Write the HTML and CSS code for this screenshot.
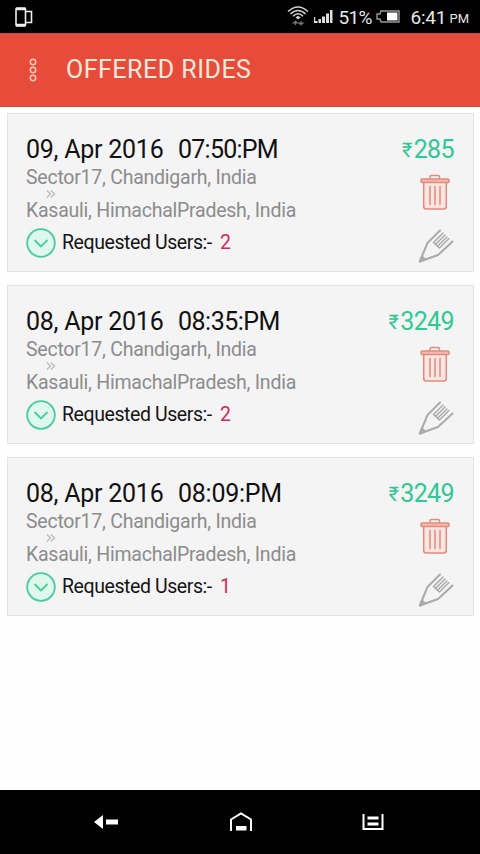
FILE: index.html
```
<!DOCTYPE html>
<html lang="en">
<head>
<meta charset="utf-8">
<title>Offered Rides</title>
<link rel="stylesheet" href="styles.css">
</head>
<body>
<svg class="defs" aria-hidden="true">
  <symbol id="trash" viewBox="0 0 30 36">
    <g fill="none" stroke="#e28a7c" stroke-width="1.5" stroke-linejoin="round" stroke-linecap="round">
      <path d="M10 4.500V3Q10 1.500 11.500 1.500H18Q19.500 1.500 19.500 3V4.500"/>
      <path d="M3.700 9V32.500Q3.700 35 6.200 35H23.800Q26.300 35 26.300 32.500V9" fill="#fae5e0"/>
      <rect x="1" y="5" width="28" height="3.500" rx="1" fill="#f4b9ae"/>
      <path d="M10 12.500V30.500M15 12.500V30.500M20 12.500V30.500"/>
    </g>
  </symbol>
  <symbol id="pencil" viewBox="0 0 36 36">
    <g fill="none" stroke="#ababab" stroke-width="2" stroke-linecap="round" stroke-linejoin="round">
      <path d="M22 1.500L9.500 14L1.800 32.500L20 26L34.500 12.500"/>
      <path d="M25 4L15.500 13.500L21.500 19L31 9.500M27 6L17.500 15.500M29 8L19.500 17.200" stroke-width="1.500"/>
      <path d="M1.800 32.500L4 27.500L7 30.500Z" fill="#ababab"/>
    </g>
  </symbol>
  <symbol id="expand" viewBox="0 0 30 30">
    <g fill="none" stroke="#48cba0" stroke-width="1.800">
      <circle cx="15" cy="15" r="13.800" fill="#dff8ee"/>
      <path d="M8.500 12L15 18.500L21.500 12"/>
    </g>
  </symbol>
</svg>
<header class="status">
  <svg class="device" width="18" height="20" viewBox="0 0 18 20" fill="none" stroke="#eee" stroke-width="1.600"><rect x="1" y="1" width="9.500" height="18" rx="1"/><path d="M1 2H10.500M1 18H10.500" stroke-width="2.500"/><path d="M10.500 4.500H16.500V15.500H10.500"/></svg>
  <div class="status-right">
    <svg class="wifi" width="22" height="20" viewBox="0 0 22 20" fill="none" stroke="#d4d4d4" stroke-width="1.500"><path d="M1 5.500Q11-3.500 21 5.500M3.500 8Q11 1 18.500 8M6 10.300Q11 5 16 10.300"/><path d="M8.500 11.500Q11 8.500 13.500 11.500L11 13.500Z" fill="#d4d4d4" stroke="none"/><path d="M8.500 19V15.500L6.500 17H10.500L8.500 15.500M14 15V18.500L12 17H16L14 18.500" stroke="#777" stroke-width="1.200"/></svg>
    <svg class="signal" width="19" height="14" viewBox="0 0 19 14" fill="#ddd"><path d="M0 7H1.200V11H3.500V13H0ZM4.500 9H7V13H4.500ZM8 6.500H11V13H8ZM12 3.500H15V13H12ZM16 0H18.500V13H16Z"/></svg>
    <span class="percent">51%</span>
    <svg class="battery" width="24" height="13" viewBox="0 0 24 13"><path d="M5 1H23V12H5L4 9H1V4H4Z" fill="none" stroke="#999" stroke-width="1.400"/><path d="M11 2.500H21.500V10.500H11Z" fill="#fff"/></svg>
    <span class="clock">6:41</span><span class="ampm">PM</span>
  </div>
</header>
<div class="appbar">
  <svg class="menu" width="10" height="24" viewBox="0 0 10 24" fill="none" stroke="#fbc9ba" stroke-width="1.500"><circle cx="5" cy="4" r="2.700"/><circle cx="5" cy="12" r="2.700"/><circle cx="5" cy="20" r="2.700"/></svg>
  <h1>OFFERED RIDES</h1>
</div>
<main class="rides">
  <article class="card">
    <div class="info">
      <div class="date"><span class="day">09, Apr 2016</span><span class="time narrow">07:50:PM</span></div>
      <div class="place from">Sector17, Chandigarh, India</div>
      <svg class="to-mark" width="10" height="10" viewBox="0 0 10 10"><path d="M1 1.500L4.500 5L1 8.500M5 1.500L8.500 5L5 8.500" fill="none" stroke="#bbb" stroke-width="1.400"/></svg>
      <div class="place to">Kasauli, HimachalPradesh, India</div>
      <div class="requests"><svg width="30" height="30"><use href="#expand"/></svg><span class="label">Requested Users:-</span><span class="count">2</span></div>
    </div>
    <div class="actions">
      <div class="price"><span class="rupee">₹</span>285</div>
      <svg class="trash" width="30" height="36"><use href="#trash"/></svg>
      <svg class="pencil" width="36" height="36"><use href="#pencil"/></svg>
    </div>
  </article>
  <article class="card">
    <div class="info">
      <div class="date"><span class="day">08, Apr 2016</span><span class="time">08:35:PM</span></div>
      <div class="place from">Sector17, Chandigarh, India</div>
      <svg class="to-mark" width="10" height="10" viewBox="0 0 10 10"><path d="M1 1.500L4.500 5L1 8.500M5 1.500L8.500 5L5 8.500" fill="none" stroke="#bbb" stroke-width="1.400"/></svg>
      <div class="place to">Kasauli, HimachalPradesh, India</div>
      <div class="requests"><svg width="30" height="30"><use href="#expand"/></svg><span class="label">Requested Users:-</span><span class="count">2</span></div>
    </div>
    <div class="actions">
      <div class="price"><span class="rupee">₹</span>3249</div>
      <svg class="trash" width="30" height="36"><use href="#trash"/></svg>
      <svg class="pencil" width="36" height="36"><use href="#pencil"/></svg>
    </div>
  </article>
  <article class="card">
    <div class="info">
      <div class="date"><span class="day">08, Apr 2016</span><span class="time wide">08:09:PM</span></div>
      <div class="place from">Sector17, Chandigarh, India</div>
      <svg class="to-mark" width="10" height="10" viewBox="0 0 10 10"><path d="M1 1.500L4.500 5L1 8.500M5 1.500L8.500 5L5 8.500" fill="none" stroke="#bbb" stroke-width="1.400"/></svg>
      <div class="place to">Kasauli, HimachalPradesh, India</div>
      <div class="requests"><svg width="30" height="30"><use href="#expand"/></svg><span class="label">Requested Users:-</span><span class="count">1</span></div>
    </div>
    <div class="actions">
      <div class="price"><span class="rupee">₹</span>3249</div>
      <svg class="trash" width="30" height="36"><use href="#trash"/></svg>
      <svg class="pencil" width="36" height="36"><use href="#pencil"/></svg>
    </div>
  </article>
</main>
<nav class="navbar">
  <svg width="26" height="20" viewBox="0 0 26 20" fill="#fff"><path d="M1 10L10 3V17ZM13 7.500H25V12.500H13Z"/></svg>
  <svg width="24" height="20" viewBox="0 0 24 20"><path d="M2 19V7.500L12 1.500L22 7.500V19" fill="none" stroke="#fff" stroke-width="2"/><path d="M7 14H17.500V18.500H7Z" fill="#fff"/></svg>
  <svg width="22" height="18" viewBox="0 0 22 18" fill="none" stroke="#fff" stroke-width="2"><path d="M1.500 1V16H20.500V1"/><path d="M5.500 5H16.500M5.500 11H16.500" stroke-width="2.800"/></svg>
</nav>
</body>
</html>
```

FILE: styles.css
```
* { box-sizing: border-box; }
body {
  margin: 0;
  height: 854px;
  display: flex;
  flex-direction: column;
  background: #fefefe;
  font-family: Roboto, "Liberation Sans", sans-serif;
  white-space: nowrap;
}
svg { display: block; flex: none; }
.defs { display: none; }
.status {
  height: 33px;
  background: #000;
  color: #e6e6e6;
  display: flex;
  justify-content: space-between;
  padding: 0 11px 0 15px;
}
.device { margin-top: 7px; }
.status-right { display: flex; line-height: 35px; }
.wifi { margin: 6px 5px 0 0; }
.signal { margin: 10px 5px 0 0; }
.percent { font-size: 19px; width: 34px; letter-spacing: -0.7px; }
.battery { margin: 10px 10px 0 4px; }
.clock { font-size: 19px; width: 34px; letter-spacing: -0.2px; }
.ampm { font-size: 13px; line-height: 38px; margin-left: 5px; }
.appbar {
  height: 74px;
  background: #e74c3a;
  border-top: 1px solid #c64e42;
  border-bottom: 1px solid #c94e43;
  display: flex;
  align-items: center;
  padding-left: 28px;
}
h1 {
  margin: -1px 0 0 28px;
  font-size: 25px;
  font-weight: 400;
  color: #ffe8dc;
  letter-spacing: 0.5px;
}
.rides {
  flex: 1;
  display: flex;
  flex-direction: column;
  gap: 13px;
  padding: 6px 6px 0 7px;
}
.card {
  height: 159px;
  background: #f4f4f4;
  border: 1px solid #e3e3e3;
  display: flex;
  justify-content: space-between;
  padding: 20px 19px 0 18px;
}
.date { display: flex; font-size: 25px; line-height: 31px; color: #111; }
.day { width: 152px; letter-spacing: -0.25px; }
.time { letter-spacing: -0.5px; }
.narrow { letter-spacing: -0.75px; }
.wide { letter-spacing: -0.25px; }
.place { font-size: 19.5px; color: #8c8c8c; letter-spacing: -0.24px; }
.from { line-height: 26px; margin-bottom: -2px; }
.to { line-height: 23px; }
.to-mark { margin-left: 20px; }
.requests {
  height: 41px;
  display: flex;
  align-items: center;
  font-size: 19.5px;
  color: #151515;
}
.label { margin-left: 6px; width: 151px; letter-spacing: -0.42px; }
.count { margin-left: 7px; color: #d02c5c; }
.actions { display: flex; flex-direction: column; align-items: flex-end; }
.price { display: flex; font-size: 25px; line-height: 31px; color: #2fc896; letter-spacing: -0.6px; }
.rupee { font-size: 20px; line-height: 32px; margin-right: 2px; }
.trash { margin: 8px 4px 0 0; }
.pencil { margin-top: 19px; }
.navbar {
  height: 64px;
  background: #000;
  display: flex;
  align-items: center;
  justify-content: space-between;
  padding: 0 96px 0 93px;
}
```
